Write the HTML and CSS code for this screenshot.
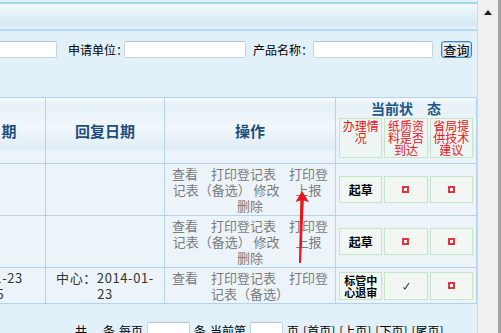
FILE: index.html
```html
<!DOCTYPE html>
<html>
<head>
<meta charset="utf-8">
<link rel="stylesheet" href="styles.css">
</head>
<body>
<div class="screen">
  <div class="view">
    <div class="frame">
      <div class="band"></div>
      <div class="search">
        <span class="lbl l0">受理编号：</span><input class="txt t0" type="text">
        <span class="lbl l1">申请单位：</span><input class="txt t1" type="text">
        <span class="lbl l2">产品名称：</span><input class="txt t2" type="text">
        <button class="btn" type="button">查询</button>
      </div>
      <table class="list">
        <colgroup><col class="c1"><col class="c2"><col class="c3"><col class="c4"></colgroup>
        <thead>
          <tr>
            <th>申请日期</th>
            <th>回复日期</th>
            <th>操作</th>
            <th class="state">
              <div class="state-title">当前状　态</div>
              <div class="boxes head">
                <div class="box">办理情况</div>
                <div class="box">纸质资料是否到达</div>
                <div class="box">省局提供技术建议</div>
              </div>
            </th>
          </tr>
        </thead>
        <tbody>
          <tr class="tall">
            <td></td>
            <td></td>
            <td class="ops">查看　打印登记表　打印登<br>记表（备选）&nbsp;修改　&nbsp;上报&nbsp;&nbsp;<br>删除</td>
            <td class="state">
              <div class="boxes">
                <div class="box"><b>起草</b></div>
                <div class="box"><i class="no"></i></div>
                <div class="box"><i class="no"></i></div>
              </div>
            </td>
          </tr>
          <tr class="tall">
            <td></td>
            <td></td>
            <td class="ops">查看　打印登记表　打印登<br>记表（备选）&nbsp;修改　&nbsp;上报&nbsp;&nbsp;<br>删除</td>
            <td class="state">
              <div class="boxes">
                <div class="box"><b>起草</b></div>
                <div class="box"><i class="no"></i></div>
                <div class="box"><i class="no"></i></div>
              </div>
            </td>
          </tr>
          <tr class="short">
            <td class="date">2014-01-23<br>15:45</td>
            <td class="date">中心：2014-01-<br>23</td>
            <td class="ops">查看　打印登记表　打印登<br>记表（备选）</td>
            <td class="state">
              <div class="boxes">
                <div class="box"><b class="small">标管中心退审</b></div>
                <div class="box"><svg class="yes" width="8" height="8" viewBox="0 0 8 8"><path d="M1.5 5.5 L3 7 L7 1" fill="none" stroke="#333" stroke-width="1.1"/></svg></div>
                <div class="box"><i class="no"></i></div>
              </div>
            </td>
          </tr>
        </tbody>
      </table>
      <div class="pager">
        <span>共</span><span class="gap">条</span><span>每页</span><input class="txt p1" type="text"><span>条</span><span>当前第</span><input class="txt p2" type="text"><span>页</span><span>[首页]</span><span>[上页]</span><span>[下页]</span><span>[尾页]</span>
      </div>
    </div>
    <svg class="arrow" width="477" height="333" viewBox="0 0 477 333">
      <polygon points="302,191 295.5,202 300.3,200.5 299,263 301,263 303.8,200.5 309,202" fill="#e8141e"/>
    </svg>
  </div>
  <div class="scroll"><span class="up"></span></div>
</div>
</body>
</html>
```
FILE: styles.css
```css
body{
margin:0;padding:0;
font-family:"Noto Sans CJK SC",sans-serif;
font-size:12px;
color:#000;
background:#fff;
}
.screen{
display:flex;
height:333px;
overflow:hidden;
}
.view{
flex:1;
position:relative;
overflow:hidden;
background:#e2f0fa;
}
.frame{
margin-left:-73px;
width:550px;
padding-top:2px;
}
.band{
height:25px;
border-top:2px solid #a8d5e6;
border-bottom:2px solid #afdaf0;
background:linear-gradient(#f2f9fc,#dcedf6 60%,#d4e8f3 85%,#eef6fb);
}
.search{
display:flex;
align-items:center;
height:17px;
margin-top:10px;
}
.lbl{
display:inline-block;
font-size:12px;
line-height:17px;
white-space:nowrap;
}
.l0{width:70px;}
.l1{width:56px;margin-left:11px;}
.l2{width:60px;margin-left:7px;}
.txt{
box-sizing:border-box;
height:17px;
border:1px solid #c7d4de;
border-top-color:#b6c4cf;
border-radius:2px;
background:#fff;
margin:0;padding:0;
}
.t0{width:60px;}
.t1{width:122px;}
.t2{width:120px;}
.btn{
box-sizing:border-box;
width:31px;height:17px;
margin:0 0 0 8px;padding:0;
border:1px solid #3f88bd;
border-radius:3px;
box-shadow:inset 0 0 0 1px #a9d2ec;
background:linear-gradient(#eef3f6,#d3dfe7);
font-family:"Noto Sans CJK SC",sans-serif;
font-size:13px;
line-height:13px;
color:#000;
}
.list{
margin-top:39px;
border-collapse:collapse;
table-layout:fixed;
width:550px;
}
.c1{width:118px;}
.c2{width:119px;}
.c3{width:171px;}
.list th,.list td{
border:1px solid #b5d2ec;
padding:0;
}
.list th{
height:65px;
font-size:15px;
font-weight:bold;
color:#1d4f7c;
vertical-align:middle;
background:linear-gradient(#fbfdfe 0,#e5f0f8 5px,#f1f7fc 30px,#e0ecf5 50px,#ebf4fa 53px,#ebf4fa 100%);
}
.list td{
background:#edf4f9;
text-align:center;
vertical-align:middle;
font-size:13px;
line-height:16px;
color:#333;
}
.list .tall td{height:51px;}
.list .short td{height:35px;}
.list td.ops{
color:#7b7b7b;
}
.list td.date{letter-spacing:.6px;}
.list th.state{
vertical-align:top;
padding:0 3px;
}
.state-title{
height:20px;
line-height:20px;
font-size:14px;
color:#1f5888;
}
.boxes{
display:grid;
grid-template-columns:1fr 1fr 1fr;
gap:2px;
}
.list td.state{padding:0 3px;}
.box{
box-sizing:border-box;
height:27px;
border:1px solid #c6e4c6;
background:#f3f7f3;
display:flex;
align-items:center;
justify-content:center;
font-size:12px;
line-height:12px;
color:#000;
letter-spacing:0;
}
.head .box{
height:40px;
align-items:flex-start;
padding:1px 2px 0;
background:#eef6f4;
color:#e8141e;
font-weight:normal;
font-size:12px;
line-height:12px;
}
.box b{font-weight:bold;}
.box b.small{font-size:11px;line-height:12px;padding:0 3px;}
.short .box{height:28px;}
.no{
display:inline-block;
width:3px;height:3px;
border:2px solid #e23440;
}
.yes{display:block;}
.pager{
display:flex;
align-items:center;
gap:4px;
height:17px;
margin-top:18px;
padding-left:148px;
font-size:12px;
white-space:nowrap;
}
.pager .gap{margin-left:12px;}
.p1{width:43px;}
.p2{width:33px;}
.arrow{
position:absolute;
left:0;top:0;
pointer-events:none;
}
.scroll{
box-sizing:border-box;
width:24px;
height:333px;
background:#f0f0f0;
border-left:1px solid #d8d8d8;
border-right:3px solid #a4a4a4;
display:flex;
justify-content:center;
}
.up{
width:0;height:0;
margin-top:10px;
border-left:4px solid transparent;
border-right:4px solid transparent;
border-bottom:5px solid #222;
}
```
